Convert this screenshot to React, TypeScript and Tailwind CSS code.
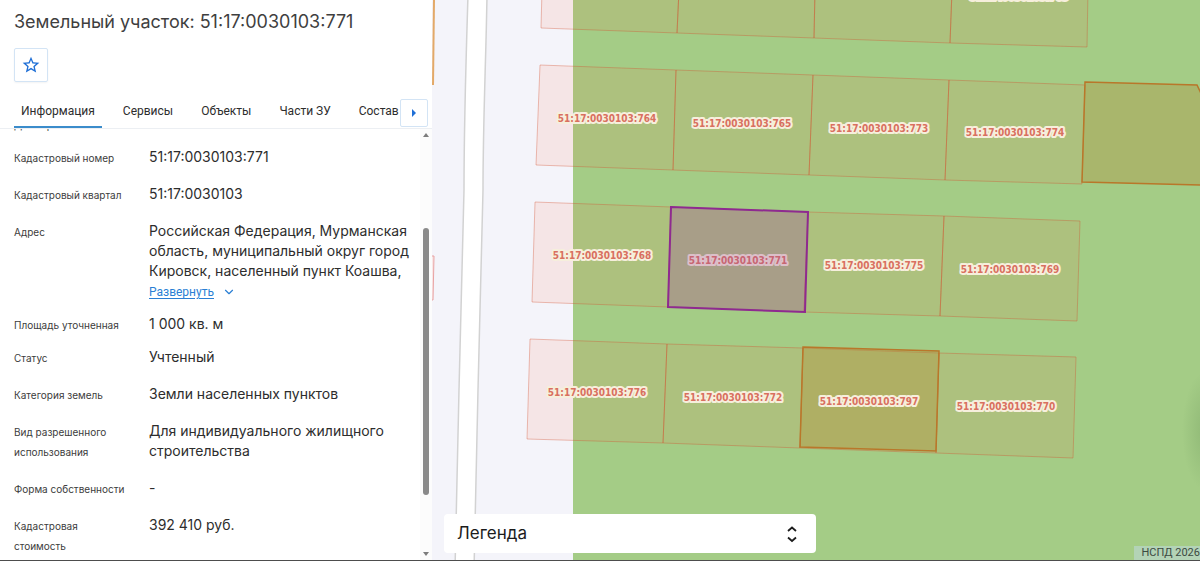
import { useState } from "react";
import { ChevronDown } from "lucide-react";

interface Field {
  label: string;
  value: string;
  tight?: boolean;
  expandable?: boolean;
}

interface Parcel {
  points: string;
  number: string;
  x: number;
  y: number;
}

const TABS = ["Информация", "Сервисы", "Объекты", "Части ЗУ", "Состав"];

const FIELDS: Field[] = [
  { label: "Дата присвоения", value: "", tight: true },
  { label: "Кадастровый номер", value: "51:17:0030103:771" },
  { label: "Кадастровый квартал", value: "51:17:0030103" },
  {
    label: "Адрес",
    value: "Российская Федерация, Мурманская область, муниципальный округ город Кировск, населенный пункт Коашва,",
    tight: true,
    expandable: true,
  },
  { label: "Площадь уточненная", value: "1 000 кв. м", tight: true },
  { label: "Статус", value: "Учтенный" },
  { label: "Категория земель", value: "Земли населенных пунктов" },
  { label: "Вид разрешенного использования", value: "Для индивидуального жилищного строительства" },
  { label: "Форма собственности", value: "-" },
  { label: "Кадастровая стоимость", value: "392 410 руб." },
];

const PARCELS: Parcel[] = [
  { points: "542,-10 679,-10 677,33 541,28", number: "", x: 0, y: 0 },
  { points: "679,-10 815,-10 814,38 677,33", number: "", x: 0, y: 0 },
  { points: "815,-10 952,-10 950,43 814,38", number: "", x: 0, y: 0 },
  { points: "952,-10 1088,-10 1087,47 950,43", number: "51:17:0030103:763", x: 1019, y: 0 },
  { points: "540,65 676,70 673,170 536,165", number: "51:17:0030103:764", x: 607, y: 122 },
  { points: "676,70 813,75 809,175 673,170", number: "51:17:0030103:765", x: 742, y: 127 },
  { points: "813,75 949,80 945,180 809,175", number: "51:17:0030103:773", x: 879, y: 132 },
  { points: "949,80 1085,85 1082,184 945,180", number: "51:17:0030103:774", x: 1015, y: 136 },
  { points: "535,202 671,207 668,307 532,302", number: "51:17:0030103:768", x: 602, y: 259 },
  { points: "671,207 808,212 804,312 668,307", number: "51:17:0030103:771", x: 738, y: 264 },
  { points: "808,212 944,216 940,316 804,312", number: "51:17:0030103:775", x: 874, y: 269 },
  { points: "944,216 1080,221 1077,321 940,316", number: "51:17:0030103:769", x: 1010, y: 273 },
  { points: "530,339 667,344 663,443 527,439", number: "51:17:0030103:776", x: 597, y: 396 },
  { points: "667,344 803,348 800,448 663,443", number: "51:17:0030103:772", x: 733, y: 401 },
  { points: "803,348 939,353 936,453 800,448", number: "51:17:0030103:797", x: 869, y: 405 },
  { points: "939,353 1076,357 1073,458 936,453", number: "51:17:0030103:770", x: 1006, y: 410 },
];

const SELECTED = "671,207 808,212 805,312 668,307";

function FieldRow({ field }: { field: Field }) {
  return (
    <div className={`flex items-start ${field.tight ? "pb-[13px]" : "pb-[17px]"}`}>
      <dt className="mt-px -mb-px w-[135px] shrink-0 pr-5 text-[10px] leading-5 text-[#3c3c3c]">{field.label}</dt>
      <dd className="min-w-0 flex-1 text-sm leading-5 text-[#2d2d2d]">
        {field.value || "\u00a0"}
        {field.expandable && (
          <button className="mt-[2px] flex items-center gap-2 font-[Roboto,sans-serif] text-xs leading-[18px] text-[#2a7fd4]">
            <span className="underline underline-offset-2">Развернуть</span>
            <ChevronDown size={14} strokeWidth={2} />
          </button>
        )}
      </dd>
    </div>
  );
}

function InfoPanel() {
  const [activeTab, setActiveTab] = useState(TABS[0]);

  return (
    <aside className="flex w-[432px] shrink-0 flex-col bg-white">
      <h1 className="px-3.5 pt-2.5 text-lg leading-6 text-[#3f3f3f]">Земельный участок: 51:17:0030103:771</h1>
      <div className="px-3.5 pt-3.5">
        <button
          aria-label="В избранное"
          className="flex size-[34px] items-center justify-center rounded-xs border border-[#d3e4f5] text-[#1f6fd6] shadow-xs"
        >
          <svg width="20" height="20" viewBox="0 0 24 24" fill="currentColor">
            <path d="M22 9.24l-7.19-.62L12 2 9.19 8.63 2 9.24l5.46 4.73L5.82 21 12 17.27 18.18 21l-1.63-7.03L22 9.24zM12 15.4l-3.76 2.27 1-4.28-3.32-2.88 4.38-.38L12 6.1l1.71 4.04 4.38.38-3.32 2.88 1 4.28L12 15.4z" />
          </svg>
        </button>
      </div>

      {/* Tabs */}
      <div className="mt-4 flex border-b border-[#eceff3] pr-1 pl-3.5">
        <div role="tablist" className="flex min-w-0 flex-1 gap-3.5 overflow-hidden">
          {TABS.map((tab) => (
            <button
              key={tab}
              role="tab"
              aria-selected={activeTab === tab}
              onClick={() => setActiveTab(tab)}
              className={`border-b-2 px-[7px] pt-px pb-[3px] font-[Roboto,sans-serif] text-xs leading-6 whitespace-nowrap text-[#2d2d2d] ${
                activeTab === tab ? "border-[#3b8ccb]" : "border-transparent"
              }`}
            >
              {tab}
            </button>
          ))}
        </div>
        <button
          aria-label="Следующие вкладки"
          className="mt-px flex size-7 shrink-0 items-center justify-center rounded-xs border border-[#d3e4f5] bg-white text-[#1f6fd6]"
        >
          <svg width="6" height="8" viewBox="0 0 6 8" fill="currentColor">
            <path d="M1 0 5 4 1 8Z" />
          </svg>
        </button>
      </div>

      {/* Fields */}
      <div className="flex min-h-0 flex-1">
        <dl className="min-w-0 flex-1 overflow-hidden pr-1 pl-3.5">
          <div className="-mt-[15px]">
            {FIELDS.map((field) => (
              <FieldRow key={field.label} field={field} />
            ))}
          </div>
        </dl>
        <div className="flex w-3 flex-col items-center bg-[#fcfcfc] py-1 text-[#7d7d7d]">
          <svg width="6" height="4" viewBox="0 0 6 4" fill="currentColor">
            <path d="M0 4 3 0 6 4Z" />
          </svg>
          <div className="flex w-full flex-1 flex-col items-center">
            <div className="flex-[91]" />
            <div className="w-1.5 flex-[266] rounded-full bg-[#8a8a8a]" />
            <div className="flex-[57]" />
          </div>
          <svg width="6" height="4" viewBox="0 0 6 4" fill="currentColor">
            <path d="M0 0 3 4 6 0Z" />
          </svg>
        </div>
      </div>
    </aside>
  );
}

function ParcelMap() {
  return (
    <svg className="block size-full bg-[#f4f4fa]" role="img" aria-label="Карта участков">
      <defs>
        <radialGradient id="shade">
          <stop offset="0" stopColor="#5f8a50" stopOpacity="0.3" />
          <stop offset="1" stopColor="#5f8a50" stopOpacity="0" />
        </radialGradient>
      </defs>
      <rect x="141" width="100%" height="100%" fill="#a4cc86" />
      <g transform="translate(-432 0)">
        <ellipse cx="1206" cy="431" rx="24" ry="60" fill="url(#shade)" />

        {/* Road */}
        <path
          d="M468 -5C466 60 464 120 464 190C462 270 460 340 459 390L455 570H474L478 390C479 330 481 270 483 190C483 120 486 60 487 -5Z"
          fill="#fff"
          stroke="#d2d2d2"
          strokeWidth="1.5"
        />
        <path d="M434 0 433 85" stroke="#e3a968" strokeWidth="2" />
        <path d="M430 256H434L433 300H430" fill="#f8e6e6" stroke="#e9a3a3" />

        {/* Parcels */}
        <g fill="#ff5f3c" fillOpacity="0.1" stroke="#d4502f" strokeOpacity="0.36">
          {PARCELS.map((parcel) => (
            <polygon key={parcel.points} points={parcel.points} />
          ))}
        </g>
        <g stroke="#b9772a" strokeWidth="1.5">
          <polygon points="803,347 939,351 936,451 800,447" fill="#b5882f" fillOpacity="0.32" />
          <polygon points="1085,82 1197,85 1206,104 1204,185 1082,182" fill="#b48d3c" fillOpacity="0.35" />
        </g>

        <g
          fill="#d9705f"
          stroke="#f6efdc"
          strokeWidth="4"
          strokeLinejoin="round"
          paintOrder="stroke"
          textAnchor="middle"
          className="font-['DejaVu_Sans_Condensed','DejaVu_Sans',sans-serif] text-[10px] font-bold"
        >
          {PARCELS.filter((parcel) => parcel.number).map((parcel) => (
            <text key={parcel.number} x={parcel.x} y={parcel.y}>
              {parcel.number}
            </text>
          ))}
        </g>
        <polygon points={SELECTED} fill="#a04fa0" fillOpacity="0.3" stroke="#8e2a90" strokeWidth="2" />
      </g>
    </svg>
  );
}

export default function App() {
  return (
    <div className="flex h-screen overflow-hidden border-b border-[#4d4d4d] font-[Inter,sans-serif]">
      <InfoPanel />
      <main className="relative min-w-0 flex-1 overflow-hidden">
        <ParcelMap />
        <button className="absolute bottom-[7px] left-3 flex h-[39px] w-[372px] items-center justify-between rounded-sm bg-white pr-[18px] pl-[13px] text-[17px] text-[#1c1c1c]">
          Легенда
          <svg width="12" height="18" viewBox="0 0 12 18" fill="none" stroke="currentColor" strokeWidth="1.8">
            <path d="M2 6 6 2.5 10 6M2 12.5 6 16 10 12.5" />
          </svg>
        </button>
        <div className="absolute right-0 bottom-0 bg-[#b3d3b6] pl-[7px] font-[Roboto,sans-serif] text-[11px] leading-[14px] text-[#3c4a42]">
          НСПД 2026
        </div>
      </main>
    </div>
  );
}
